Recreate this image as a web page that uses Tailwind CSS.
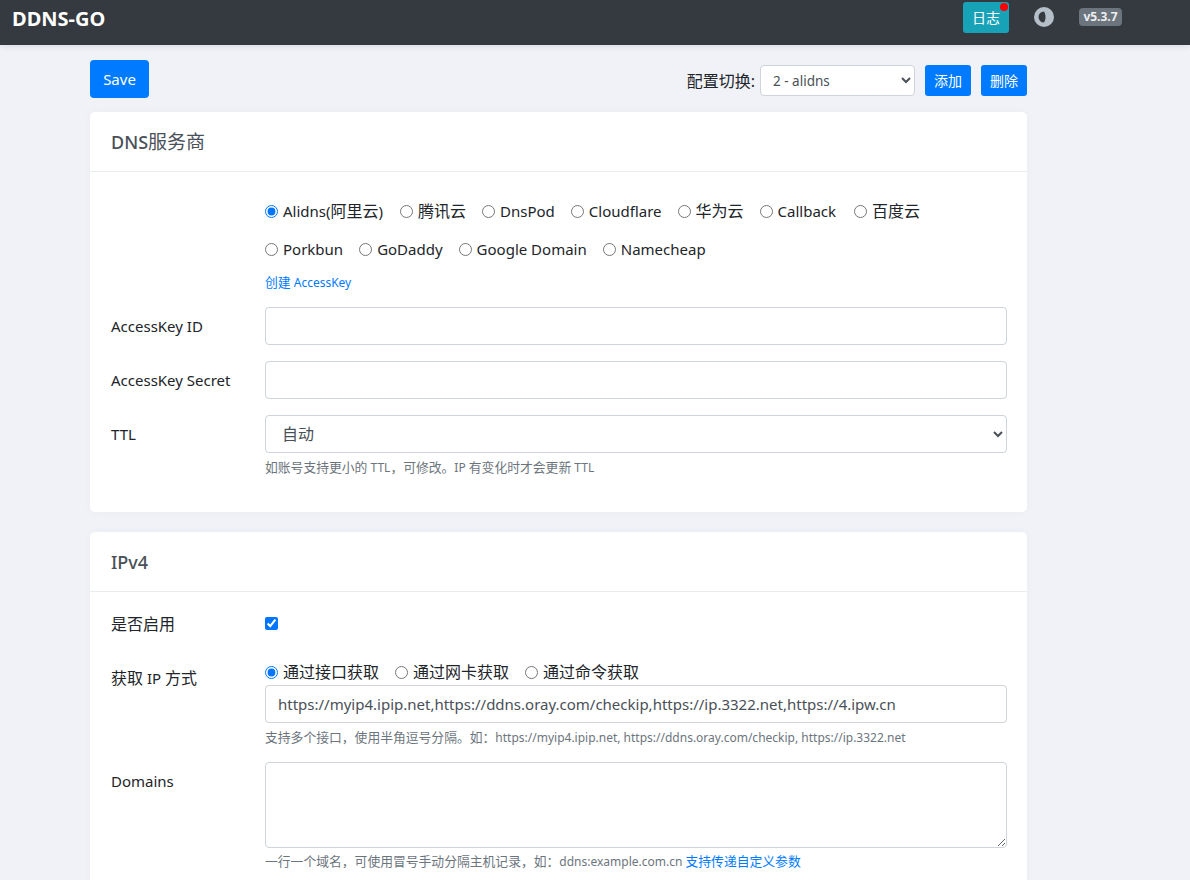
<!DOCTYPE html>
<html lang="zh-CN">
<head>
  <meta charset="UTF-8">
  <title>DDNS-GO</title>
  <script src="https://cdn.jsdelivr.net/npm/@tailwindcss/browser@4"></script>
</head>
<body class="h-[880px] overflow-hidden bg-[#f1f2f8] text-[15px] text-[#212529] font-['Noto_Sans','Noto_Sans_CJK_SC',sans-serif]">
  <!-- navbar -->
  <nav class="relative h-[45px] bg-[#343a40] shadow-[0_2px_6px_rgba(0,0,0,0.08)]">
    <span class="absolute left-[12px] top-[5px] text-[20px] leading-[27px] font-bold text-white">DDNS-GO</span>
    <div class="absolute left-[963px] top-[2px] flex h-[31px] w-[46px] items-center justify-center rounded-[3px] bg-[#17a2b8] text-[14px] text-white">日志
      <span class="absolute right-[1px] top-[1px] h-[8px] w-[8px] rounded-full bg-[#ff0000]"></span>
    </div>
    <svg class="absolute left-[1034px] top-[7px]" width="20" height="20" viewBox="0 0 20 20">
      <circle cx="10" cy="10" r="10" fill="#b4bfca"/>
      <path d="M10 4.500a5.500 5.500 0 0 0 0 11c1-1.600 1.500-3.500 1.500-5.500S11 6.100 10 4.500z" fill="#343a40"/>
    </svg>
    <span class="absolute left-[1079px] top-[8px] flex h-[18px] w-[43px] items-center justify-center rounded-[4px] bg-[#6c757d] text-[12px] font-bold text-[#eceef0]">v5.3.7</span>
  </nav>

  <main class="ml-[90px] w-[937px]">
    <!-- toolbar -->
    <div class="flex h-[67px] items-start justify-between pt-[15px]">
      <button class="h-[38px] w-[59px] rounded-[4px] bg-[#007bff] text-white">Save</button>
      <div class="mt-[5px] flex items-center">
        <span class="mr-[5px] text-[16px]">配置切换:</span>
        <select class="mr-[10px] h-[31px] w-[155px] rounded-[4px] border border-[#ced4da] bg-white pl-[8px] text-[13.500px] text-[#495057]">
          <option>2 - alidns</option>
        </select>
        <button class="mr-[10px] h-[31px] w-[46px] rounded-[3px] bg-[#007bff] text-[14px] text-white">添加</button>
        <button class="h-[31px] w-[46px] rounded-[3px] bg-[#007bff] text-[14px] text-white">删除</button>
      </div>
    </div>

    <!-- DNS card -->
    <section class="h-[400px] rounded-[5px] bg-white shadow-[0_0_10px_rgba(0,0,0,0.03)]">
      <h2 class="flex h-[60px] items-center border-b border-[#e9ecef] pl-[21px] pr-[20px] pt-[1px] text-[18px] font-medium text-[#495057]">DNS<span class="text-[19px] font-normal">服务商</span></h2>
      <div class="pl-[175px] pr-[20px] pt-[27px]">
        <div class="flex h-[24px] items-center gap-[16px]">
          <label class="mr-[1px] flex items-center gap-[5px]"><input type="radio" name="dns" checked class="h-[13px] w-[13px] accent-[#0075ff]"><span>Alidns(<span class="text-[16px]">阿里云</span>)</span></label>
          <label class="flex items-center gap-[5px] text-[16px]"><input type="radio" name="dns" class="h-[13px] w-[13px]">腾讯云</label>
          <label class="flex items-center gap-[5px]"><input type="radio" name="dns" class="h-[13px] w-[13px]">DnsPod</label>
          <label class="flex items-center gap-[5px]"><input type="radio" name="dns" class="h-[13px] w-[13px]">Cloudflare</label>
          <label class="flex items-center gap-[5px] text-[16px]"><input type="radio" name="dns" class="h-[13px] w-[13px]">华为云</label>
          <label class="mr-[2px] flex items-center gap-[5px]"><input type="radio" name="dns" class="h-[13px] w-[13px]">Callback</label>
          <label class="flex items-center gap-[5px] text-[16px]"><input type="radio" name="dns" class="h-[13px] w-[13px]">百度云</label>
        </div>
        <div class="mt-[14px] flex h-[24px] items-center gap-[16px]">
          <label class="flex items-center gap-[5px]"><input type="radio" name="dns" class="h-[13px] w-[13px]">Porkbun</label>
          <label class="flex items-center gap-[5px]"><input type="radio" name="dns" class="h-[13px] w-[13px]">GoDaddy</label>
          <label class="flex items-center gap-[5px]"><input type="radio" name="dns" class="h-[13px] w-[13px]">Google Domain</label>
          <label class="flex items-center gap-[5px]"><input type="radio" name="dns" class="h-[13px] w-[13px]">Namecheap</label>
        </div>
        <a class="mt-[13px] block text-[12px] leading-[16px] text-[#007bff]"><span class="text-[12.800px]">创建</span> AccessKey</a>
      </div>
      <div class="mt-[16px] flex pl-[21px] pr-[20px]">
        <label class="w-[154px] shrink-0 pt-[8px] leading-[22px]">AccessKey ID</label>
        <input class="h-[38px] w-[742px] rounded-[4px] border border-[#ced4da] bg-white">
      </div>
      <div class="mt-[16px] flex pl-[21px] pr-[20px]">
        <label class="w-[154px] shrink-0 pt-[8px] leading-[22px]">AccessKey Secret</label>
        <input class="h-[38px] w-[742px] rounded-[4px] border border-[#ced4da] bg-white">
      </div>
      <div class="mt-[16px] flex pl-[21px] pr-[20px]">
        <label class="w-[154px] shrink-0 pt-[8px] leading-[22px]">TTL</label>
        <div>
          <select class="h-[38px] w-[742px] rounded-[4px] border border-[#ced4da] bg-white pl-[12px] text-[16px] text-[#495057]">
            <option>自动</option>
          </select>
          <p class="mt-[5px] text-[12px] leading-[18px] text-[#6c757d]"><span class="text-[12.800px]">如账号支持更小的</span> TTL<span class="text-[12.800px]">，可修改。</span>IP <span class="text-[12.800px]">有变化时才会更新</span> TTL</p>
        </div>
      </div>
    </section>

    <!-- IPv4 card -->
    <section class="mt-[20px] rounded-[5px] bg-white pb-[40px] shadow-[0_0_10px_rgba(0,0,0,0.03)]">
      <h2 class="flex h-[60px] items-center border-b border-[#e9ecef] pl-[21px] pr-[20px] pt-[1px] text-[18px] font-medium text-[#495057]">IPv4</h2>
      <div class="flex h-[64px] items-start pl-[21px] pr-[20px] pt-[21px]">
        <label class="w-[154px] shrink-0 text-[16px] leading-[22px]">是否启用</label>
        <input type="checkbox" checked class="mt-[4px] h-[13px] w-[13px] accent-[#0075ff]">
      </div>
      <div class="flex pl-[21px] pr-[20px] pt-[4px]">
        <label class="w-[154px] shrink-0 pt-[7px] leading-[22px]"><span class="text-[16px]">获取</span> IP <span class="text-[16px]">方式</span></label>
        <div>
          <div class="flex h-[24px] items-center gap-[16px] text-[16px]">
            <label class="flex items-center gap-[5px]"><input type="radio" name="ip" checked class="h-[13px] w-[13px] accent-[#0075ff]">通过接口获取</label>
            <label class="flex items-center gap-[5px]"><input type="radio" name="ip" class="h-[13px] w-[13px]">通过网卡获取</label>
            <label class="flex items-center gap-[5px]"><input type="radio" name="ip" class="h-[13px] w-[13px]">通过命令获取</label>
          </div>
          <input value="https://myip4.ipip.net,https://ddns.oray.com/checkip,https://ip.3322.net,https://4.ipw.cn" class="mt-[1px] h-[38px] w-[742px] rounded-[4px] border border-[#ced4da] bg-white px-[12px] text-[#495057]">
          <p class="mt-[5px] text-[12px] leading-[18px] text-[#6c757d]"><span class="text-[12.800px]">支持多个接口，使用半角逗号分隔。如：</span>https://myip4.ipip.net, https://ddns.oray.com/checkip, https://ip.3322.net</p>
        </div>
      </div>
      <div class="mt-[15px] flex pl-[21px] pr-[20px]">
        <label class="w-[154px] shrink-0 pt-[8px] leading-[22px]">Domains</label>
        <div>
          <textarea class="block h-[86px] w-[742px] rounded-[4px] border border-[#ced4da] bg-white"></textarea>
          <p class="mt-[4px] text-[12px] leading-[18px] text-[#6c757d]"><span class="text-[12.800px]">一行一个域名，可使用冒号手动分隔主机记录，如：</span>ddns:example.com.cn <a class="text-[12.800px] text-[#007bff]">支持传递自定义参数</a></p>
        </div>
      </div>
    </section>
  </main>
</body>
</html>
